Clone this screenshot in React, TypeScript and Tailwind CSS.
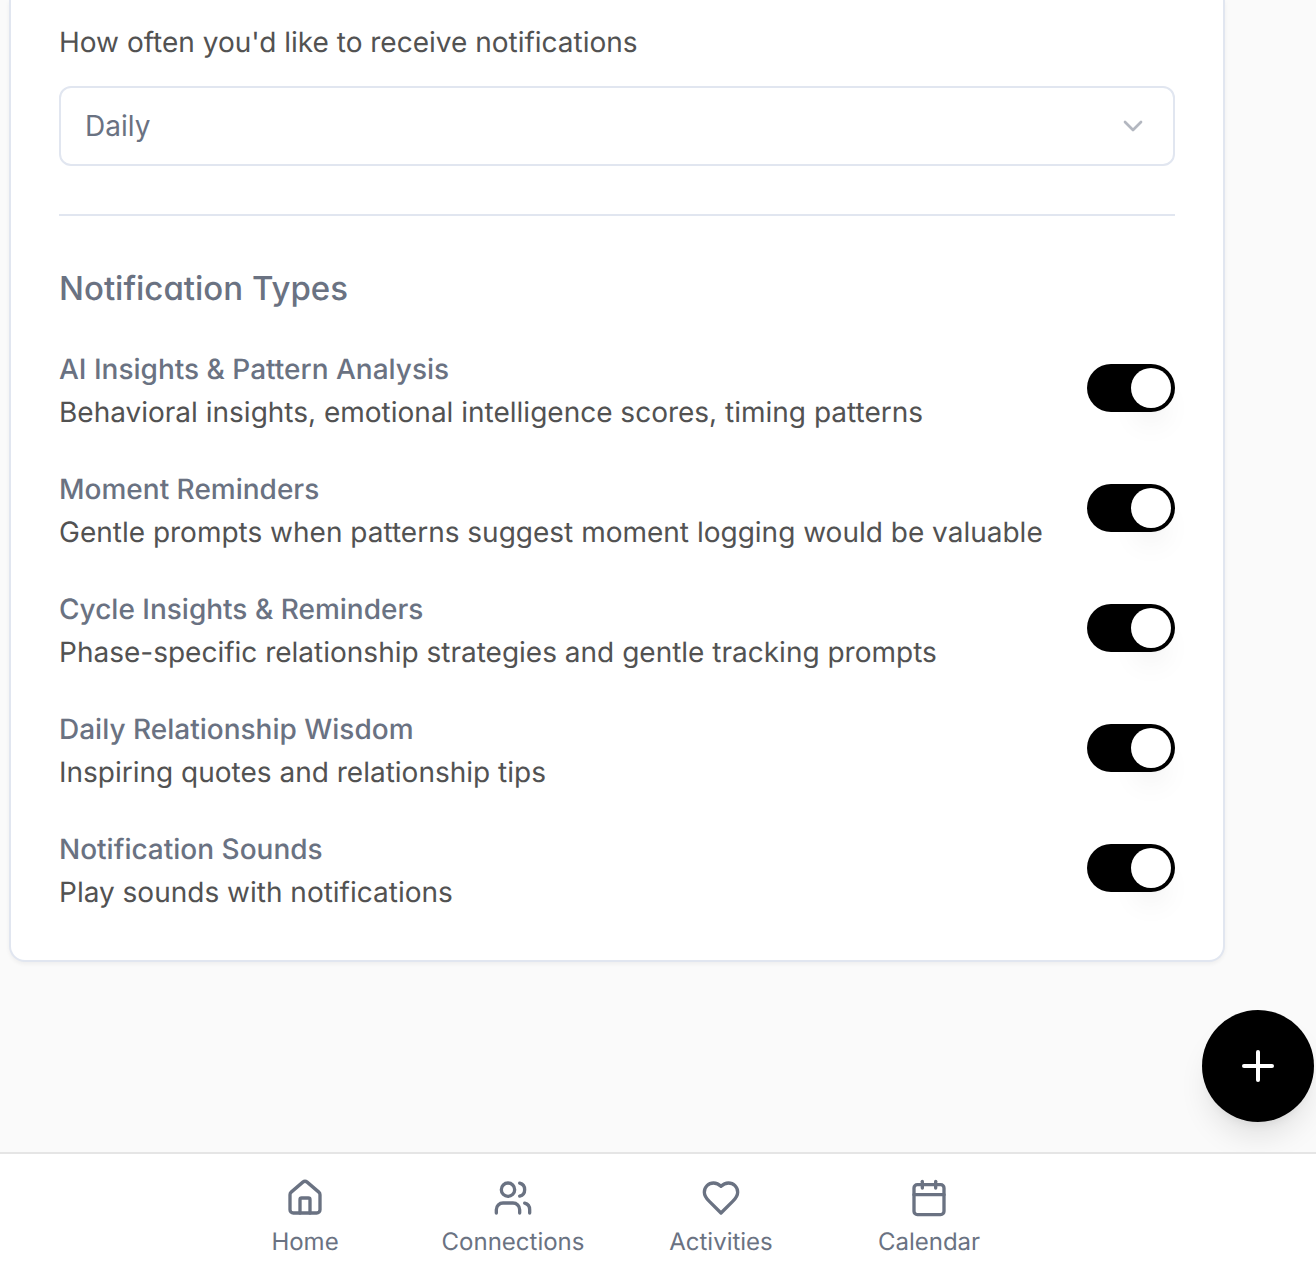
import { Calendar, ChevronDown, House, Plus, Users } from "lucide-react";
import type { ReactNode } from "react";

const notificationTypes = [
  { label: "AI Insights & Pattern Analysis", description: "Behavioral insights, emotional intelligence scores, timing patterns" },
  { label: "Moment Reminders", description: "Gentle prompts when patterns suggest moment logging would be valuable" },
  { label: "Cycle Insights & Reminders", description: "Phase-specific relationship strategies and gentle tracking prompts" },
  { label: "Daily Relationship Wisdom", description: "Inspiring quotes and relationship tips" },
  { label: "Notification Sounds", description: "Play sounds with notifications" },
];

function HeartIcon() {
  return (
    <svg viewBox="0 0 24 24" fill="none" stroke="currentColor" strokeWidth="2" strokeLinecap="round" strokeLinejoin="round" className="size-10">
      <path d="M19 14c1.49-1.46 3-3.21 3-5.5A5.5 5.5 0 0 0 16.5 3c-1.76 0-3 .5-4.5 2-1.5-1.5-2.74-2-4.5-2A5.5 5.5 0 0 0 2 8.5c0 2.3 1.5 4.05 3 5.5l7 7Z" />
    </svg>
  );
}

function Toggle() {
  return (
    <button role="switch" aria-checked="true" className="flex h-12 w-22 shrink-0 justify-end self-center rounded-full bg-black p-1">
      <span className="size-10 rounded-full bg-white shadow-[0_20px_30px_-6px_rgba(0,0,0,0.08),0_8px_12px_-8px_rgba(0,0,0,0.06)]" />
    </button>
  );
}

function SettingRow({ label, description }: { label: string; description: string }) {
  return (
    <div className="flex h-20 items-start justify-between">
      <div className="flex flex-col gap-[3px] pt-px whitespace-nowrap text-[28px] leading-10">
        <span className="font-medium text-gray-500">{label}</span>
        <span className="text-[#525252]">{description}</span>
      </div>
      <Toggle />
    </div>
  );
}

function NavItem({ label, children }: { label: string; children: ReactNode }) {
  return (
    <a className="flex w-52 flex-col items-center gap-2 text-2xl leading-8 text-gray-500">
      {children}
      <span>{label}</span>
    </a>
  );
}

export default function App() {
  return (
    <div className="relative flex h-[1282px] w-[1316px] flex-col overflow-hidden bg-[#fafafa] font-['Inter',sans-serif] antialiased [font-optical-sizing:none] [text-rendering:geometricPrecision]">
      <main className="flex-1">
        <section className="ml-[9px] h-[962px] w-[1216px] rounded-b-2xl border-2 border-t-0 border-[#e1e6f0] bg-white px-12 pt-[22px] shadow-[0_2px_4px_rgba(0,0,0,0.05)]">
          <p className="text-[28px] leading-10 text-[#525252]">How often you'd like to receive notifications</p>
          <button className="mt-6 flex h-20 w-full items-center justify-between rounded-xl border-2 border-[#e1e6f0] px-6 text-[28px] leading-10 text-gray-500">
            <span>Daily</span>
            <ChevronDown className="size-8 opacity-50" />
          </button>
          <hr className="mt-12 border-t-2 border-[#e1e6f0]" />
          <h2 className="mt-12 text-[33px] leading-12 font-medium text-gray-500 [font-feature-settings:'cv11']">Notification Types</h2>
          <div className="mt-9 flex flex-col gap-10">
            {notificationTypes.map((item) => (
              <SettingRow key={item.label} {...item} />
            ))}
          </div>
        </section>
      </main>
      <button aria-label="Add" className="absolute top-[1010px] left-[1202px] flex size-28 items-center justify-center rounded-full bg-black text-white shadow-[0_20px_30px_-6px_rgba(0,0,0,0.1),0_8px_12px_-8px_rgba(0,0,0,0.1)]">
        <Plus className="size-12" />
      </button>
      <nav className="relative flex h-[130px] border-t-2 border-[#e5e5e5] bg-white pt-6 pl-[201px]">
        <NavItem label="Home"><House className="size-10" /></NavItem>
        <NavItem label="Connections"><Users className="size-10" /></NavItem>
        <NavItem label="Activities"><HeartIcon /></NavItem>
        <NavItem label="Calendar"><Calendar className="size-10" /></NavItem>
      </nav>
    </div>
  );
}
